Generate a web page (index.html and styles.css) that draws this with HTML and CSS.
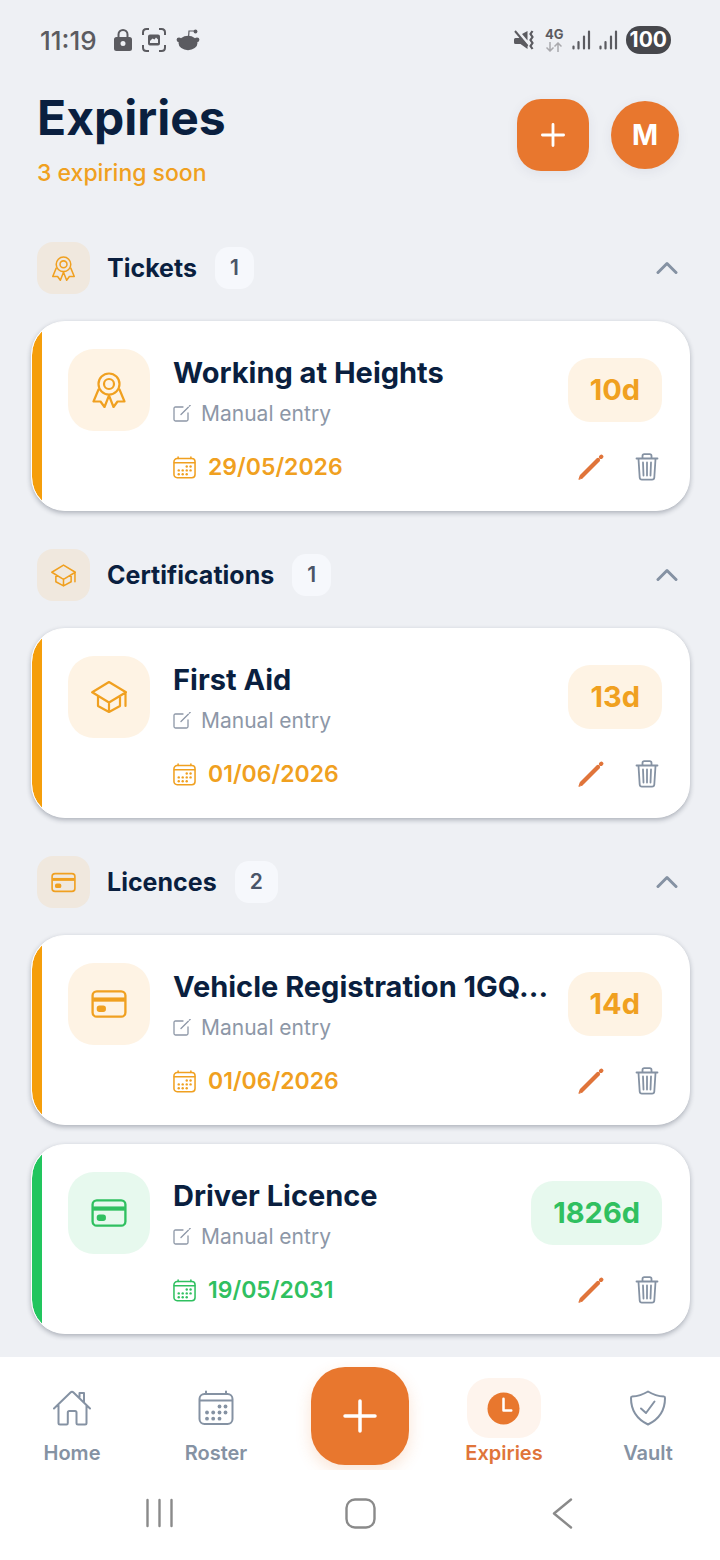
FILE: index.html
```html
<!DOCTYPE html>
<html lang="en">
<head>
<meta charset="utf-8">
<meta name="viewport" content="width=device-width, initial-scale=1">
<title>Expiries</title>
<link rel="stylesheet" href="styles.css">
</head>
<body>
<svg class="sprite" aria-hidden="true">
  <symbol id="ribbon" viewBox="0 0 34 36">
    <circle cx="17" cy="12" r="10.5"/><circle cx="17" cy="12" r="5"/>
    <path d="M6.5 17.5 1.5 29.5H8.5L12.5 35 17 23.5 21.5 35 25.5 29.5H32.5L27.5 17.5"/>
  </symbol>
  <symbol id="cap" viewBox="0 0 36 34">
    <path d="M18 2 35 12.3 18 22.5 1.2 12.3ZM7 16V26L18 32 29 26V16M18 22.500V32M34.500 12.500V26"/>
  </symbol>
  <symbol id="card" viewBox="0 0 34 28">
    <rect x="1.500" y="2" width="31" height="24" rx="4"/>
    <path d="M2 9.800H32" stroke-width="4" stroke-linecap="butt"/>
    <rect x="6.500" y="16.500" width="6.500" height="4" rx="1.500" fill="currentColor"/>
  </symbol>
  <symbol id="calendar" viewBox="0 0 36 36">
    <rect x="1.500" y="4" width="33" height="30" rx="5"/>
    <path d="M2 10.500H34M8 1.500V4M28 1.500V4"/>
    <g fill="currentColor" stroke="none"><circle cx="21.500" cy="16.500" r="1.900"/><circle cx="27.500" cy="16.500" r="1.900"/><circle cx="9" cy="22.500" r="1.900"/><circle cx="15.200" cy="22.500" r="1.900"/><circle cx="21.500" cy="22.500" r="1.900"/><circle cx="27.500" cy="22.500" r="1.900"/><circle cx="9" cy="28.700" r="1.900"/><circle cx="15.200" cy="28.700" r="1.900"/><circle cx="21.500" cy="28.700" r="1.900"/></g>
  </symbol>
  <symbol id="compose" viewBox="0 0 18 18">
    <path d="M10 2H2.500Q1 2 1 3.500V14.500Q1 16 2.500 16H13.500Q15 16 15 14.500V8M8 9.500 15.300 2.200M16.500 1 17.200 .3"/>
  </symbol>
  <symbol id="pencil" viewBox="0 0 26 26">
    <path d="M4 22 20 6" stroke-width="4.200"/><path d="M1 25 2.300 21.500 4.500 23.700Z" fill="currentColor" stroke-width="1"/>
    <path d="M23 3 23.400 2.600" stroke-width="4"/>
  </symbol>
  <symbol id="trash" viewBox="0 0 24 28">
    <path d="M1.500 5.500H22.500M7.500 5V3Q7.500 1.200 9.300 1.200H14.700Q16.500 1.200 16.500 3V5M3.500 6 4.700 24.500Q4.800 26.700 7 26.700H17Q19.200 26.700 19.300 24.500L20.500 6M8 9.500 8.500 22.500M12 9.500V22.500M16 9.500 15.500 22.500"/>
  </symbol>
  <symbol id="chevron" viewBox="0 0 22 14"><path d="M2 11.500 11 2.500 20 11.500"/></symbol>
  <symbol id="plus" viewBox="0 0 34 34"><path d="M17 2V32M2 17H32"/></symbol>
  <symbol id="home" viewBox="0 0 38 36">
    <path d="M1 18.500 17.500 2.500Q19 1 20.500 2.500L37 18.500M26.500 7V3H31V12M5.500 15.500V33Q5.500 34.500 7 34.500H13.500Q14.800 34.500 14.800 33V22.500Q14.800 21 16.300 21H22Q23.500 21 23.500 22.500V33Q23.500 34.500 25 34.500H32Q33.500 34.500 33.500 33V15.500"/>
  </symbol>
  <symbol id="shield" viewBox="0 0 36 36">
    <path d="M18 1.500C13 4.500 8 6.200 2 6.500Q1 6.500 1 8C1 20 6.500 29 18 34.500C29.500 29 35 20 35 8Q35 6.500 34 6.500C28 6.200 23 4.500 18 1.500ZM11 18.500 16 23 24.500 11.500"/>
  </symbol>
  <symbol id="clock" viewBox="0 0 34 34">
    <circle cx="17" cy="17" r="16.500" fill="currentColor" stroke="none"/><path d="M17 7V19H25" stroke="#fff" stroke-width="2.600"/>
  </symbol>
</svg>

<div class="screen">
  <div class="status">
    <div class="status-group">
      <span class="time">11:19</span>
      <svg class="lock" viewBox="0 0 18 24" aria-hidden="true"><path d="M4.500 10V6.500a4.500 4.500 0 0 1 9 0V10" fill="none" stroke="currentColor" stroke-width="2"/><path d="M2.500 9H15.500Q18 9 18 11.500V20.500Q18 23 15.500 23H2.500Q0 23 0 20.500V11.500Q0 9 2.500 9ZM9 13a2.500 2.500 0 1 0 0 5 2.500 2.500 0 0 0 0-5Z" fill="currentColor" fill-rule="evenodd"/></svg>
      <svg class="capture" viewBox="0 0 24 24" aria-hidden="true"><path d="M1 7V4.500Q1 1 4.500 1H7M17 1H19.500Q23 1 23 4.500V7M23 17V19.500Q23 23 19.500 23H17M7 23H4.500Q1 23 1 19.500V17" fill="none" stroke="currentColor" stroke-width="2"/><path d="M8 6.500H16Q18 6.500 18 8.500V15.500Q18 17.500 16 17.500H8Q6 17.500 6 15.500V8.500Q6 6.500 8 6.500ZM8 15H16V11.500L14 9.500 12.500 11.500 10.500 10.500 8 13Z" fill="currentColor" fill-rule="evenodd"/></svg>
      <svg class="reddit" viewBox="0 0 24 24" aria-hidden="true"><path d="M12.500 10 13 3H18.500" fill="none" stroke="currentColor" stroke-width="1.200"/><circle cx="19.500" cy="3.500" r="1.900" fill="currentColor"/><ellipse cx="12" cy="15" rx="9.500" ry="7.200" fill="currentColor"/><circle cx="3" cy="11.800" r="2.400" fill="currentColor"/><circle cx="21" cy="11.800" r="2.400" fill="currentColor"/></svg>
    </div>
    <div class="status-group status-right">
      <svg class="mute" viewBox="0 0 20 20" aria-hidden="true"><path d="M0 9.500Q0 8 1.500 8H5L6.500 7 13.500 15V19L6.500 14H1.500Q0 14 0 12.500ZM8 4 13.500 1V10.500Z" fill="currentColor"/><path d="M1 1 13.500 16" fill="none" stroke="currentColor" stroke-width="2"/><path d="M18.500 1 16.500 4 18.500 7 16.500 10 18.500 13 16.500 16 18.500 19" fill="none" stroke="currentColor" stroke-width="2.200"/></svg>
      <span class="network">4G<svg class="arrows" viewBox="0 0 16 10" aria-hidden="true"><path d="M4 0V9M.5 5.500 4 9 7.500 5.500M12 10V1M8.500 4.500 12 1 15.500 4.500" fill="none" stroke="currentColor" stroke-width="1.500"/></svg></span>
      <svg class="signal" viewBox="0 0 19 20" aria-hidden="true"><path d="M1.500 16.500V18.500M6.500 12V18.500M12 6.500V18.500M17 1.500V18.500" stroke="currentColor" stroke-width="2.200" stroke-linecap="round"/></svg>
      <svg class="signal" viewBox="0 0 19 20" aria-hidden="true"><path d="M1.500 16.500V18.500M6.500 12V18.500M12 6.500V18.500M17 1.500V18.500" stroke="currentColor" stroke-width="2.200" stroke-linecap="round"/></svg>
      <span class="battery">100</span>
    </div>
  </div>

  <header class="header">
    <div>
      <h1 class="page-title">Expiries</h1>
      <p class="page-note">3 expiring soon</p>
    </div>
    <div class="header-actions">
      <button class="add" type="button" aria-label="Add expiry"><svg class="icon"><use href="#plus"/></svg></button>
      <button class="avatar" type="button">M</button>
    </div>
  </header>

  <main class="sections">
    <section class="section">
      <button class="section-head" type="button" aria-expanded="true">
        <span class="section-icon"><svg class="icon"><use href="#ribbon"/></svg></span>
        <span class="section-title">Tickets</span><span class="count">1</span>
        <svg class="icon chevron"><use href="#chevron"/></svg>
      </button>
      <article class="card">
        <div class="card-top">
          <span class="tile"><svg class="icon"><use href="#ribbon"/></svg></span>
          <div class="card-text"><h2 class="card-title">Working at Heights</h2><p class="source"><svg class="icon"><use href="#compose"/></svg>Manual entry</p></div>
          <span class="badge">10d</span>
        </div>
        <div class="card-foot">
          <span class="date"><svg class="icon"><use href="#calendar"/></svg>29/05/2026</span>
          <button class="action edit" type="button" aria-label="Edit"><svg class="icon"><use href="#pencil"/></svg></button>
          <button class="action" type="button" aria-label="Delete"><svg class="icon"><use href="#trash"/></svg></button>
        </div>
      </article>
    </section>

    <section class="section">
      <button class="section-head" type="button" aria-expanded="true">
        <span class="section-icon"><svg class="icon"><use href="#cap"/></svg></span>
        <span class="section-title">Certifications</span><span class="count">1</span>
        <svg class="icon chevron"><use href="#chevron"/></svg>
      </button>
      <article class="card">
        <div class="card-top">
          <span class="tile"><svg class="icon"><use href="#cap"/></svg></span>
          <div class="card-text"><h2 class="card-title">First Aid</h2><p class="source"><svg class="icon"><use href="#compose"/></svg>Manual entry</p></div>
          <span class="badge">13d</span>
        </div>
        <div class="card-foot">
          <span class="date"><svg class="icon"><use href="#calendar"/></svg>01/06/2026</span>
          <button class="action edit" type="button" aria-label="Edit"><svg class="icon"><use href="#pencil"/></svg></button>
          <button class="action" type="button" aria-label="Delete"><svg class="icon"><use href="#trash"/></svg></button>
        </div>
      </article>
    </section>

    <section class="section">
      <button class="section-head" type="button" aria-expanded="true">
        <span class="section-icon"><svg class="icon"><use href="#card"/></svg></span>
        <span class="section-title">Licences</span><span class="count">2</span>
        <svg class="icon chevron"><use href="#chevron"/></svg>
      </button>
      <div class="card-list">
        <article class="card">
          <div class="card-top">
            <span class="tile"><svg class="icon"><use href="#card"/></svg></span>
            <div class="card-text"><h2 class="card-title">Vehicle Registration 1GQ...</h2><p class="source"><svg class="icon"><use href="#compose"/></svg>Manual entry</p></div>
            <span class="badge">14d</span>
          </div>
          <div class="card-foot">
            <span class="date"><svg class="icon"><use href="#calendar"/></svg>01/06/2026</span>
            <button class="action edit" type="button" aria-label="Edit"><svg class="icon"><use href="#pencil"/></svg></button>
            <button class="action" type="button" aria-label="Delete"><svg class="icon"><use href="#trash"/></svg></button>
          </div>
        </article>
        <article class="card card-ok">
          <div class="card-top">
            <span class="tile"><svg class="icon"><use href="#card"/></svg></span>
            <div class="card-text"><h2 class="card-title">Driver Licence</h2><p class="source"><svg class="icon"><use href="#compose"/></svg>Manual entry</p></div>
            <span class="badge">1826d</span>
          </div>
          <div class="card-foot">
            <span class="date"><svg class="icon"><use href="#calendar"/></svg>19/05/2031</span>
            <button class="action edit" type="button" aria-label="Edit"><svg class="icon"><use href="#pencil"/></svg></button>
            <button class="action" type="button" aria-label="Delete"><svg class="icon"><use href="#trash"/></svg></button>
          </div>
        </article>
      </div>
    </section>
  </main>

  <nav class="tabs" aria-label="Main">
    <a class="tab" href="#"><span class="tab-icon"><svg class="icon"><use href="#home"/></svg></span>Home</a>
    <a class="tab" href="#"><span class="tab-icon"><svg class="icon"><use href="#calendar"/></svg></span>Roster</a>
    <button class="fab" type="button" aria-label="Add"><svg class="icon"><use href="#plus"/></svg></button>
    <a class="tab tab-active" href="#" aria-current="page"><span class="tab-icon"><svg class="icon"><use href="#clock"/></svg></span>Expiries</a>
    <a class="tab" href="#"><span class="tab-icon"><svg class="icon"><use href="#shield"/></svg></span>Vault</a>
  </nav>

  <div class="system">
    <button class="system-key" type="button" aria-label="Recent apps"><svg viewBox="0 0 32 32"><path d="M5.500 3V29M17.500 3V29M29.500 3V29"/></svg></button>
    <button class="system-key" type="button" aria-label="Home screen"><svg viewBox="0 0 32 32"><rect x="2.500" y="2.500" width="28" height="28" rx="8.500"/></svg></button>
    <button class="system-key" type="button" aria-label="Back"><svg viewBox="0 0 32 32"><path d="M25 2.500 8 16.500 25 30.500"/></svg></button>
  </div>
</div>
</body>
</html>
```

FILE: styles.css
```css
* {
  box-sizing: border-box;
}

body {
  margin: 0;
  background: #eef0f4;
  color: #0a1f3f;
  font-family: Inter, "Liberation Sans", sans-serif;
}

h1,
h2,
p {
  margin: 0;
}

button {
  margin: 0;
  padding: 0;
  border: 0;
  background: none;
  color: inherit;
  font: inherit;
  text-align: left;
}

svg {
  display: block;
  flex: none;
}

.sprite {
  position: absolute;
  width: 0;
  height: 0;
}

.icon {
  fill: none;
  stroke: currentColor;
  stroke-width: 2;
  stroke-linecap: round;
  stroke-linejoin: round;
}

.screen {
  display: flex;
  flex-direction: column;
  min-height: 100vh;
}

/* Status bar */
.status {
  display: flex;
  justify-content: space-between;
  align-items: center;
  height: 80px;
  padding: 0 49px 0 40px;
  color: #5b5b60;
}

.status-group {
  display: flex;
  align-items: center;
  gap: 10px;
}

.status-right {
  gap: 8px;
}

.time {
  margin-right: 7px;
  font-size: 26px;
  font-weight: 500;
}

.lock {
  width: 18px;
  height: 24px;
}

.capture,
.reddit {
  width: 24px;
  height: 24px;
}

.mute {
  width: 20px;
  height: 20px;
}

.network {
  display: flex;
  flex-direction: column;
  align-items: center;
  gap: 2px;
  margin-left: 3px;
  font-size: 13px;
  font-weight: 700;
  line-height: 12px;
}

.arrows {
  width: 16px;
  height: 10px;
  color: #a9a9ad;
}

.signal {
  width: 19px;
  height: 20px;
}

.battery {
  padding: 0 4px;
  border-radius: 14px;
  background: #46474c;
  color: #fff;
  font-size: 21px;
  font-weight: 700;
  line-height: 28px;
}

/* Header */
.header {
  display: flex;
  justify-content: space-between;
  align-items: center;
  padding: 8px 41px 0 37px;
}

.page-title {
  font-size: 48px;
  font-weight: 700;
  line-height: 60px;
}

.page-note {
  margin-top: 10px;
  color: #f0a020;
  font-size: 23px;
  font-weight: 500;
  line-height: 30px;
}

.header-actions {
  display: flex;
  align-items: center;
  gap: 22px;
  margin-bottom: 6px;
}

.add,
.avatar {
  display: grid;
  place-items: center;
  background: #e8772e;
  color: #fff;
  box-shadow: 0 3px 12px rgb(60 70 100 / 8%);
}

.add {
  width: 72px;
  height: 72px;
  border-radius: 24px;
}

.add .icon {
  width: 24px;
  height: 24px;
  stroke-width: 4;
}

.avatar {
  width: 68px;
  height: 68px;
  border-radius: 50%;
  font-size: 28px;
  font-weight: 700;
}

/* Sections */
.sections {
  display: flex;
  flex: 1;
  flex-direction: column;
  gap: 38px;
  padding: 54px 30px 22px 31px;
}

.section-head {
  display: flex;
  align-items: center;
  width: 100%;
  margin-bottom: 27px;
  padding: 0 12px 0 6px;
}

.section-icon {
  display: grid;
  place-items: center;
  width: 53px;
  height: 52px;
  border-radius: 16px;
  background: #f0e8de;
  color: #f0a020;
}

.section-icon .icon {
  width: 25px;
  height: 25px;
  stroke-width: 2.2;
}

.section-title {
  margin-left: 17px;
  font-size: 25px;
  font-weight: 700;
}

.count {
  margin-left: 18px;
  padding: 0 15px;
  border-radius: 14px;
  background: #f6f8fc;
  color: #4a5568;
  font-size: 21px;
  font-weight: 600;
  line-height: 42px;
}

.chevron {
  width: 22px;
  height: 14px;
  margin-left: auto;
  color: #8592a3;
  stroke-width: 3;
}

.card-list {
  display: grid;
  gap: 19px;
}

/* Expiry cards */
.card {
  --accent: #f59e0b;
  --accent-text: #f0a020;
  --tint: #fef3e4;
  padding: 27px;
  border: 1px solid #fff;
  border-radius: 34px;
  background: linear-gradient(to right, var(--accent) 10px, #fff 10px) padding-box, #fff;
  box-shadow: 0 2px 5px rgb(20 30 50 / 30%);
}

.card-ok {
  --accent: #22c55e;
  --accent-text: #30c060;
  --tint: #e7f9ee;
}

.card-top {
  display: flex;
  align-items: center;
  padding-left: 9px;
}

.tile {
  display: grid;
  flex: none;
  place-items: center;
  width: 82px;
  height: 82px;
  border-radius: 26px;
  background: var(--tint);
  color: var(--accent-text);
}

.tile .icon {
  width: 36px;
  height: 36px;
  stroke-width: 2.2;
}

.card-text {
  flex: 1;
  min-width: 0;
  margin-left: 23px;
  padding-top: 4px;
}

.card-title {
  overflow: hidden;
  font-size: 29px;
  font-weight: 700;
  line-height: 40px;
  text-overflow: ellipsis;
  white-space: nowrap;
}

.source {
  display: flex;
  align-items: center;
  gap: 10px;
  margin-top: 4px;
  color: #8d97a7;
  font-size: 21px;
  line-height: 34px;
}

.source .icon {
  width: 18px;
  height: 18px;
  stroke-width: 1.3;
}

.badge {
  margin-left: 16px;
  padding: 0 22px;
  border-radius: 22px;
  background: var(--tint);
  color: var(--accent-text);
  font-size: 29px;
  font-weight: 700;
  line-height: 64px;
}

.card-foot {
  display: flex;
  align-items: center;
  gap: 26px;
  height: 32px;
  margin-top: 20px;
  padding-left: 114px;
}

.date {
  display: flex;
  flex: 1;
  align-items: center;
  gap: 12px;
  color: var(--accent-text);
  font-size: 23px;
  font-weight: 600;
}

.date .icon {
  width: 23px;
  height: 23px;
  stroke-width: 2.4;
}

.action {
  display: grid;
  place-items: center;
  width: 30px;
  height: 32px;
  color: #8592a3;
}

.action .icon {
  width: 24px;
  height: 28px;
  stroke-width: 1.8;
}

.edit {
  color: #e0743a;
}

.edit .icon {
  width: 26px;
  height: 26px;
}

/* Tab bar */
.tabs {
  display: grid;
  grid-template-columns: repeat(5, 1fr);
  justify-items: center;
  align-items: start;
  height: 113px;
  overflow: hidden;
  background: #fff;
}

.tab {
  display: flex;
  flex-direction: column;
  align-items: center;
  padding-top: 21px;
  color: #8592a3;
  font-size: 20px;
  font-weight: 600;
  line-height: 30px;
  text-decoration: none;
}

.tab-icon {
  display: grid;
  place-items: center;
  width: 74px;
  height: 60px;
  border-radius: 22px;
}

.tab-icon .icon {
  width: 38px;
  height: 36px;
}

.tab-active {
  color: #e0743a;
}

.tab-active .tab-icon {
  background: #fef4ed;
  color: #e8772e;
}

.tab-active .tab-icon .icon {
  width: 33px;
  height: 33px;
}

.fab {
  display: grid;
  place-items: center;
  width: 98px;
  height: 98px;
  margin-top: 10px;
  border-radius: 34px;
  background: #e8772e;
  box-shadow: 0 6px 16px rgb(232 119 46 / 20%);
  color: #fff;
}

.fab .icon {
  width: 34px;
  height: 34px;
  stroke-width: 3.5;
}

/* System navigation */
.system {
  display: grid;
  grid-template-columns: repeat(3, 1fr);
  justify-items: center;
  align-items: center;
  height: 90px;
  padding: 0 57px 4px;
  background: #fff;
}

.system-key svg {
  width: 32px;
  height: 32px;
  fill: none;
  stroke: #8a8a8a;
  stroke-width: 2.4;
  stroke-linecap: round;
  stroke-linejoin: round;
}
```
